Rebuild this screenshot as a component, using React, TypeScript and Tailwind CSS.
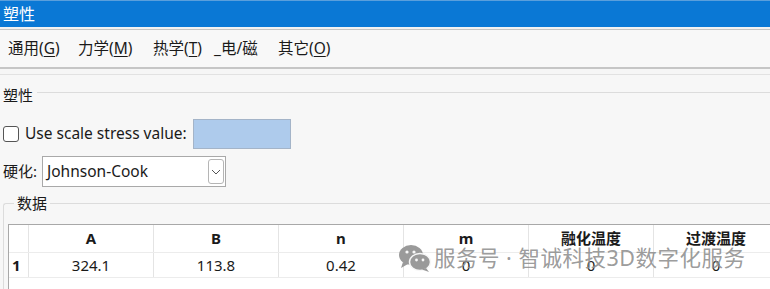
import React from "react";

const font = { fontFamily: '"Noto Sans", "Noto Sans CJK SC", sans-serif' };

const tabs = [
  { label: "通用(", key: "G", rest: ")", w: "w-[70px]" },
  { label: "力学(", key: "M", rest: ")", w: "w-[75px]" },
  { label: "热学(", key: "T", rest: ")", w: "w-[61px]" },
  { label: "", key: "", rest: "_电/磁", w: "w-[64px]" },
  { label: "其它(", key: "O", rest: ")", w: "w-[70px]" },
];

const columns = ["A", "B", "n", "m", "融化温度", "过渡温度"];
const values = ["324.1", "113.8", "0.42", "0", "0", "0"];

function WeChatIcon() {
  return (
    <svg width="34" height="30" viewBox="0 0 34 30">
      <ellipse cx="13" cy="12" rx="12" ry="10" fill="#9a9a9a" />
      <path d="M5 19 L3 25 L10 21 Z" fill="#9a9a9a" />
      <ellipse cx="22" cy="19" rx="10.5" ry="8.5" fill="#9a9a9a" stroke="#f7f7f7" strokeWidth="1.5" />
      <path d="M28 25 L31 29 L24 26.5 Z" fill="#9a9a9a" />
      <circle cx="9" cy="9" r="1.6" fill="#f7f7f7" />
      <circle cx="16" cy="9" r="1.6" fill="#f7f7f7" />
      <circle cx="18.5" cy="17" r="1.4" fill="#f7f7f7" />
      <circle cx="25" cy="17" r="1.4" fill="#f7f7f7" />
    </svg>
  );
}

export default function App() {
  return (
    <div
      className="relative w-[770px] h-[289px] overflow-hidden bg-[#f7f7f7] text-[#1a1a1a]"
      style={font}
    >
      {/* Title bar */}
      <div className="h-[27px] bg-[#0a78d5] border-t border-[#5a9fdc] flex items-center px-[3px] text-white text-[16px] leading-none">
        塑性
      </div>
      <div className="h-[3px] bg-[#f2f2f2] border-b border-[#c4c4c4]" />

      {/* Tabs */}
      <div className="h-[39px] bg-[#f8f8f8] border-b-2 border-[#c6c6c6] flex items-center pl-[8px] text-[15.5px]">
        {tabs.map((t, i) => (
          <span key={i} className={t.w}>
            {t.label}
            {t.key && <span className="underline underline-offset-2">{t.key}</span>}
            {t.rest}
          </span>
        ))}
      </div>
      <div className="h-[6px] border-b border-[#e2e2e2] bg-[#f6f6f6]" />

      {/* Group: 塑性 */}
      <div className="flex items-center mt-[9px] pl-[3px] h-[22px]">
        <span className="text-[15px]">塑性</span>
        <div className="flex-1 ml-[4px] mt-[-6px] border-t border-[#dcdcdc]" />
      </div>

      <div className="flex items-center mt-[13px] pl-[3px] h-[30px]">
        <div className="w-[16px] h-[16px] rounded-[3px] border border-[#555] bg-white" />
        <span className="ml-[6px] text-[15.5px]">Use scale stress value:</span>
        <div className="ml-[6px] w-[98px] h-[30px] bg-[#aecbec] border border-[#a4b4c8]" />
      </div>

      <div className="flex items-center mt-[7px] pl-[3px] h-[31px]">
        <span className="text-[15px] w-[39px]">硬化:</span>
        <div className="w-[184px] h-[31px] bg-white border border-[#a9a9a9] flex items-center justify-between pl-[4px] pr-[1px]">
          <span className="text-[15.5px]">Johnson-Cook</span>
          <div className="w-[16px] h-[25px] rounded-[3px] border border-[#b5b5b5] bg-white flex items-center justify-center">
            <svg width="10" height="6" viewBox="0 0 10 6">
              <path d="M1 1 L5 5 L9 1" stroke="#555" strokeWidth="1" fill="none" />
            </svg>
          </div>
        </div>
      </div>

      {/* Group: 数据 */}
      <div className="mt-[16px] ml-[3px] relative border-l border-t border-[#dcdcdc] rounded-tl-[3px] h-[120px]">
        <span className="absolute -top-[11px] left-[10px] px-[3px] bg-[#f7f7f7] text-[15px] leading-[20px]">
          数据
        </span>
        <div className="mt-[20px] ml-[4px] border-t border-l border-[#a8a8a8] bg-white h-[80px]">
          <div className="grid grid-cols-[20px_125px_125px_125px_125px_125px_125px] h-[28px] border-b border-[#ececec]">
            <div className="border-r border-[#e4e4e4]" />
            {columns.map((c) => (
              <div
                key={c}
                className="border-r border-[#e4e4e4] flex items-center justify-center font-bold text-[15px]"
              >
                {c}
              </div>
            ))}
          </div>
          <div className="grid grid-cols-[20px_125px_125px_125px_125px_125px_125px] h-[25px] border-b border-[#ececec]">
            <div className="border-r border-[#e4e4e4] flex items-center pl-[3px] font-bold text-[15px]">
              1
            </div>
            {values.map((v, i) => (
              <div
                key={i}
                className="border-r border-[#e4e4e4] flex items-center justify-center text-[15px]"
              >
                {v}
              </div>
            ))}
          </div>
        </div>
      </div>

      {/* Watermark */}
      <div className="absolute left-[398px] top-[243px] flex items-center gap-[2px] text-[#8f8f8f]/90 pointer-events-none">
        <WeChatIcon />
        <span className="text-[21.5px] leading-none tracking-[0.5px]">服务号 · 智诚科技3D数字化服务</span>
      </div>
    </div>
  );
}
